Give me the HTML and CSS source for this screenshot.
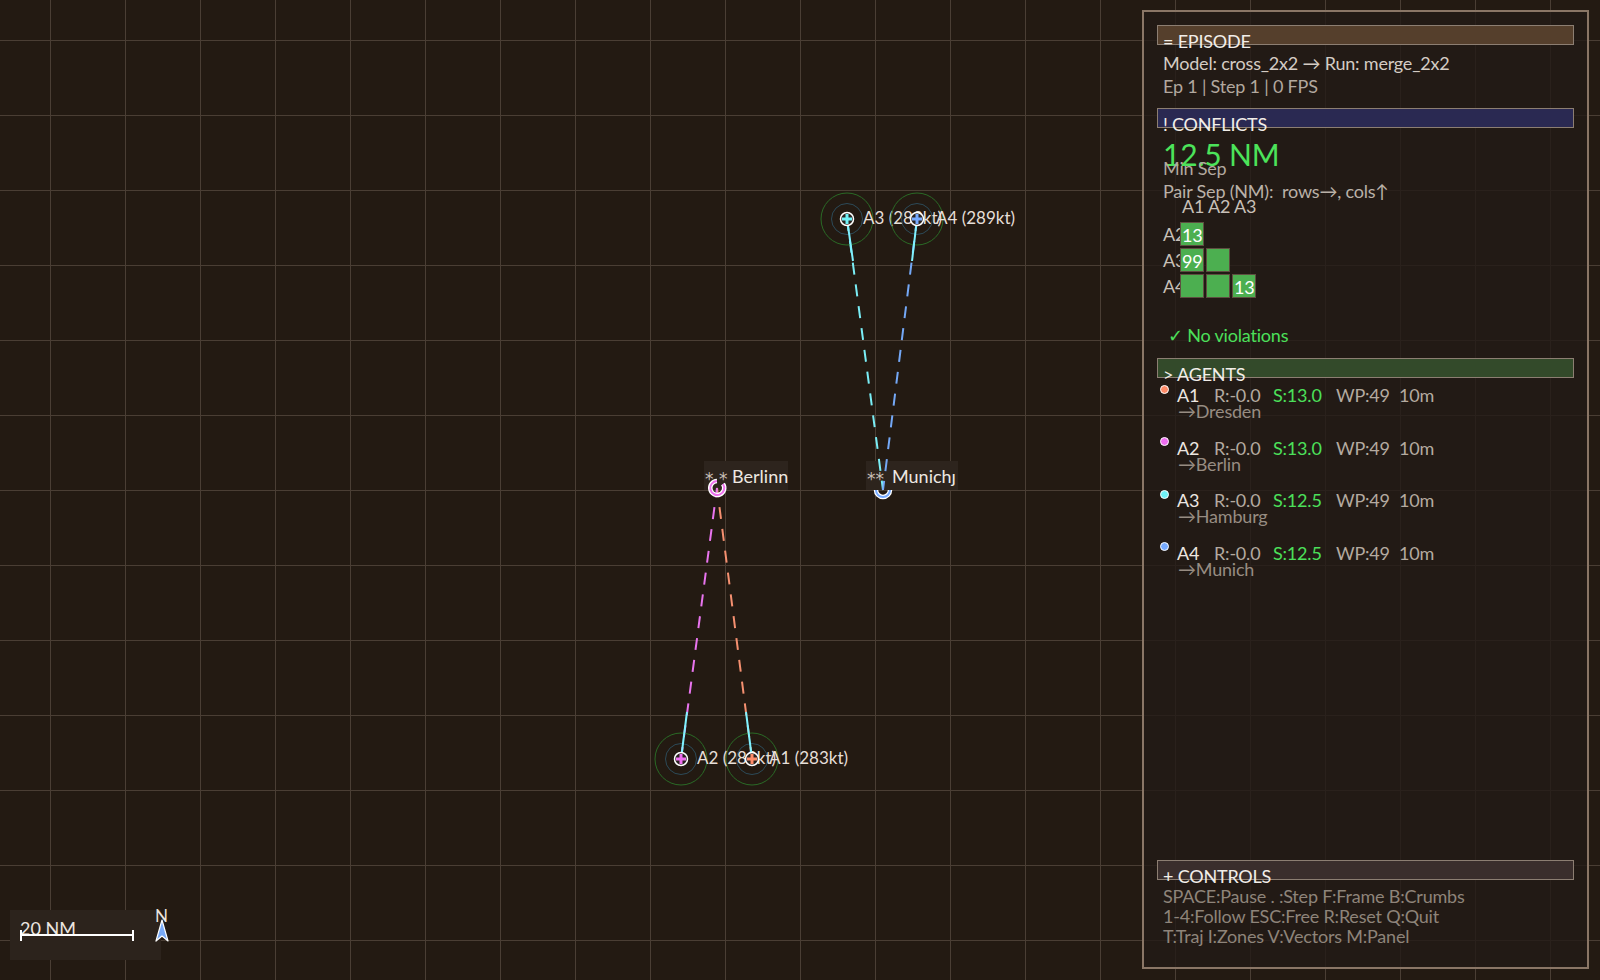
FILE: index.html
```html
<!DOCTYPE html>
<html lang="en">
<head>
<meta charset="utf-8">
<title>Episode viewer</title>
<link rel="stylesheet" href="styles.css">
</head>
<body>
<div class="app">
  <svg class="map" width="1600" height="980" viewBox="0 0 1600 980" xmlns="http://www.w3.org/2000/svg">
    <defs>
      <pattern id="grid" patternUnits="userSpaceOnUse" x="50" y="40" width="75" height="75">
        <path d="M0.5 0V75M0 0.5H75" class="grid-line"/>
      </pattern>
    </defs>
    <rect x="0" y="0" width="1600" height="980" class="map-bg"/>
    <rect x="0" y="0" width="1600" height="980" fill="url(#grid)"/>

    <!-- destination labels -->
    <rect x="704" y="461" width="84" height="29" class="dest-box"/>
    <text x="705" y="485" class="dest-star">* *</text>
    <text x="732" y="483" class="dest-name">Berlinn</text>
    <rect x="866" y="461" width="92" height="29" class="dest-box"/>
    <text x="867" y="485" class="dest-star">**</text>
    <text x="892" y="483" class="dest-name">Munich<tspan class="dest-tail">ȷ</tspan></text>

    <!-- trajectories -->
    <line x1="752" y1="759" x2="717" y2="488" class="traj traj-a1"/>
    <line x1="681" y1="759" x2="717" y2="488" class="traj traj-a2"/>
    <line x1="847" y1="219" x2="883" y2="490" class="traj traj-a3"/>
    <line x1="917" y1="219" x2="883" y2="490" class="traj traj-a4"/>

    <!-- destination markers -->
    <path d="M723 484 A7 7 0 1 1 717 481" class="dest-ring-out"/>
    <path d="M723 484 A7 7 0 1 1 717 481" class="dest-ring dest-a2"/>
    <path d="M876 490 A7 7 0 0 0 890 490" class="dest-ring-out"/>
    <path d="M876 490 A7 7 0 0 0 890 490" class="dest-ring dest-a4"/>

    <!-- A1 / A2 zones -->
    <circle cx="752" cy="759" r="26" class="zone-outer"/>
    <circle cx="752" cy="759" r="15.5" class="zone-inner"/>
    <circle cx="681" cy="759" r="26" class="zone-outer"/>
    <circle cx="681" cy="759" r="15.5" class="zone-inner"/>
    <!-- A2 -->
    <line x1="681" y1="759" x2="687" y2="712" class="vec"/>
    <circle cx="681" cy="759" r="6.5" class="ac-ring"/>
    <path d="M676 759H686M681 754V764" class="ac-cross ac-a2"/>
    <text x="697" y="764" class="ac-label">A2 (282kt)</text>
    <!-- A1 -->
    <line x1="752" y1="759" x2="746" y2="712" class="vec"/>
    <circle cx="752" cy="759" r="6.5" class="ac-ring"/>
    <path d="M747 759H757M752 754V764" class="ac-cross ac-a1"/>
    <text x="769" y="764" class="ac-label">A1 (283kt)</text>

    <!-- A3 -->
    <circle cx="847" cy="219" r="26" class="zone-outer"/>
    <circle cx="847" cy="219" r="15.5" class="zone-inner"/>
    <line x1="847" y1="219" x2="853" y2="261" class="vec"/>
    <circle cx="847" cy="219" r="6.5" class="ac-ring"/>
    <path d="M842 219H852M847 214V224" class="ac-cross ac-a3"/>
    <text x="863" y="224" class="ac-label">A3 (289kt)</text>
    <!-- A4 -->
    <circle cx="917" cy="219" r="26" class="zone-outer"/>
    <circle cx="917" cy="219" r="15.5" class="zone-inner"/>
    <line x1="917" y1="219" x2="912" y2="261" class="vec"/>
    <circle cx="917" cy="219" r="6.5" class="ac-ring"/>
    <path d="M912 219H922M917 214V224" class="ac-cross ac-a4"/>
    <text x="936" y="224" class="ac-label">A4 (289kt)</text>

    <!-- scale bar and north arrow -->
    <rect x="10" y="910" width="151" height="50" class="scale-box"/>
    <text x="20" y="935" class="scale-text">20 NM</text>
    <path d="M21 935H133M21 930V941M133 930V941" class="scale-bar"/>
    <text x="155" y="922" class="north-text">N</text>
    <path d="M162 920L168 941L162 936L156 941Z" class="north-arrow"/>
  </svg>

  <aside class="panel">
    <section class="sec sec-episode">
      <div class="hdr hdr-episode">= EPISODE</div>
      <div class="body">
        <div class="line l23 t-model">Model: cross_2x2 → Run: merge_2x2</div>
        <div class="line l23 t-dim">Ep 1 | Step 1 | 0 FPS</div>
      </div>
    </section>

    <section class="sec sec-conflicts">
      <div class="hdr hdr-conflicts">! CONFLICTS</div>
      <div class="body">
        <div class="big">12.5 NM</div>
        <div class="line l14 t-dim">Min Sep</div>
        <div class="line l20 t-pair">Pair Sep (NM):&nbsp; rows→, cols↑</div>
        <div class="line l10 t-cols">A1 A2 A3</div>
        <div class="matrix">
          <div class="mrow"><span class="mlabel">A2</span><span class="cell">13</span></div>
          <div class="mrow"><span class="mlabel">A3</span><span class="cell">99</span><span class="cell"></span></div>
          <div class="mrow"><span class="mlabel">A4</span><span class="cell"></span><span class="cell"></span><span class="cell">13</span></div>
        </div>
        <div class="line l23 t-ok">✓ No violations</div>
      </div>
    </section>

    <section class="sec sec-agents">
      <div class="hdr hdr-agents">&gt; AGENTS</div>
      <div class="agents">
        <div class="agent">
          <div class="arow"><span class="dot dot-a1"></span><span class="aid">A1</span><span class="t-val">R:-0.0</span><span class="t-green">S:13.0</span><span class="t-val">WP:49</span><span class="t-val">10m</span></div>
          <div class="adest">→Dresden</div>
        </div>
        <div class="agent">
          <div class="arow"><span class="dot dot-a2"></span><span class="aid">A2</span><span class="t-val">R:-0.0</span><span class="t-green">S:13.0</span><span class="t-val">WP:49</span><span class="t-val">10m</span></div>
          <div class="adest">→Berlin</div>
        </div>
        <div class="agent">
          <div class="arow"><span class="dot dot-a3"></span><span class="aid">A3</span><span class="t-val">R:-0.0</span><span class="t-green">S:12.5</span><span class="t-val">WP:49</span><span class="t-val">10m</span></div>
          <div class="adest">→Hamburg</div>
        </div>
        <div class="agent">
          <div class="arow"><span class="dot dot-a4"></span><span class="aid">A4</span><span class="t-val">R:-0.0</span><span class="t-green">S:12.5</span><span class="t-val">WP:49</span><span class="t-val">10m</span></div>
          <div class="adest">→Munich</div>
        </div>
      </div>
    </section>

    <section class="sec sec-controls">
      <div class="hdr hdr-controls">+ CONTROLS</div>
      <div class="body ctl">
        <div class="line l20">SPACE:Pause . :Step F:Frame B:Crumbs</div>
        <div class="line l20">1-4:Follow ESC:Free R:Reset Q:Quit</div>
        <div class="line l20">T:Traj I:Zones V:Vectors M:Panel</div>
      </div>
    </section>
  </aside>
</div>
</body>
</html>
```

FILE: styles.css
```css
* { box-sizing: border-box; }
html, body {
  margin: 0;
  padding: 0;
  background: #231a12;
  overflow: hidden;
}
body {
  font-family: Lato, "Noto Sans", "DejaVu Sans", sans-serif;
  font-size: 18px;
  color: #e8e2dc;
}
.app {
  position: relative;
  width: 1600px;
  height: 980px;
}
.map { display: block; }
.map text { font-family: Lato, "Noto Sans", "DejaVu Sans", sans-serif; }
.map-bg { fill: #231a12; }
.grid-line { stroke: #4a3e34; stroke-width: 1; fill: none; }

.dest-box { fill: #2d241d; }
.map .dest-star { font-family: "DejaVu Sans", sans-serif; font-size: 17px; fill: #c8beb4; }
.dest-name { font-size: 18px; fill: #eee8e2; }
.dest-tail { font-size: 18px; }

.traj { stroke-width: 2; stroke-dasharray: 12 10; fill: none; }
.traj-a1 { stroke: #f59070; }
.traj-a2 { stroke: #e874ee; }
.traj-a3 { stroke: #7aeef6; }
.traj-a4 { stroke: #74a8f6; }

.dest-ring-out { fill: none; stroke: #ffffff; stroke-width: 4.5; }
.dest-ring { fill: none; stroke-width: 2; }
.dest-a2 { stroke: #ee70ee; }
.dest-a4 { stroke: #76aaff; }

.zone-outer { fill: none; stroke: #2a6a26; stroke-width: 1; }
.zone-inner { fill: none; stroke: #2c4a58; stroke-width: 1; }
.vec { stroke: #80f2ff; stroke-width: 2; }
.ac-ring { fill: #2a2420; stroke: #ffffff; stroke-width: 1.5; }
.ac-cross { stroke-width: 3; fill: none; }
.ac-a1 { stroke: #ff8c69; }
.ac-a2 { stroke: #ee6ef0; }
.ac-a3 { stroke: #6ff2f7; }
.ac-a4 { stroke: #76aaff; }
.ac-label { font-size: 17px; fill: #e6dfd8; }

.scale-box { fill: #2c231c; }
.scale-text { font-size: 18px; fill: #ece6e0; }
.scale-bar { stroke: #ffffff; stroke-width: 2; fill: none; }
.north-text { font-size: 17px; fill: #ece6e0; }
.north-arrow { fill: #78aaf8; stroke: #ffffff; stroke-width: 1.2; stroke-linejoin: round; }

/* panel */
.panel {
  position: absolute;
  left: 1142px;
  top: 10px;
  width: 447px;
  height: 959px;
  border: 2px solid #8a7666;
  background: rgba(34, 26, 23, 0.8);
  padding: 13px 13px 21px 13px;
  display: flex;
  flex-direction: column;
  letter-spacing: -0.2px;
}
.hdr {
  height: 20px;
  border: 1px solid #8c7e72;
  padding: 5px 0 0 5px;
  line-height: 20px;
  color: #f2eee9;
  white-space: nowrap;
}
.hdr-episode { background: #553f2c; }
.hdr-conflicts { background: #2a2952; }
.hdr-agents { background: #334a2a; }
.hdr-controls { background: #3a2e2c; }

.body { padding-left: 6px; }
.line { white-space: nowrap; }
.l23 { height: 23px; line-height: 23px; }
.l20 { height: 20px; line-height: 20px; }
.l14 { height: 14px; line-height: 14px; }
.l10 { height: 10px; line-height: 10px; }

.sec-episode .body { margin-top: 6.5px; }
.t-model { color: #d4ccc4; }
.t-dim { color: #b2a89f; }
.t-pair { color: #bab1a8; margin-top: 6px; }
.t-cols { color: #c8c0b8; padding-left: 19px; }
.t-ok { color: #4ce05a; padding-left: 5px; margin-top: 25.5px; }

.sec-conflicts { margin-top: 10.5px; }
.big {
  margin-top: 19.4px;
  font-size: 30px;
  height: 14px;
  line-height: 14px;
  color: #4ce35a;
  white-space: nowrap;
}

.matrix {
  margin-top: 11px;
  display: flex;
  flex-direction: column;
  gap: 2px;
}
.mrow {
  display: flex;
  height: 24px;
  gap: 2px;
}
.mlabel {
  width: 17px;
  margin-right: -2px;
  line-height: 24px;
  color: #c8c0b8;
  white-space: nowrap;
  overflow: visible;
}
.cell {
  width: 24px;
  height: 24px;
  border: 1px solid #5e4e40;
  background: #4caf50;
  color: #ffffff;
  line-height: 24px;
  padding-left: 1px;
  white-space: nowrap;
}

.sec-agents { margin-top: 11.5px; }
.agents { padding-left: 3px; margin-top: 9px; }
.agent { margin-bottom: 20.5px; }
.arow {
  display: grid;
  grid-template-columns: 17px 37px 59px 63px 63px auto;
  height: 16px;
  line-height: 16px;
  white-space: nowrap;
}
.dot {
  width: 9px;
  height: 9px;
  border-radius: 50%;
  border: 1.5px solid #ffffff;
  margin-top: -2.5px;
}
.dot-a1 { background: #ff8c69; }
.dot-a2 { background: #ee6ef0; }
.dot-a3 { background: #6ff2f7; }
.dot-a4 { background: #76aaff; }
.aid { color: #ece6e0; }
.t-val { color: #b4aaa0; }
.t-green { color: #4ce05a; }
.adest {
  height: 16px;
  line-height: 16px;
  padding-left: 18px;
  color: #978c82;
  white-space: nowrap;
}

.sec-controls { margin-top: auto; }
.ctl { margin-top: 6px; color: #8e847a; }
```
